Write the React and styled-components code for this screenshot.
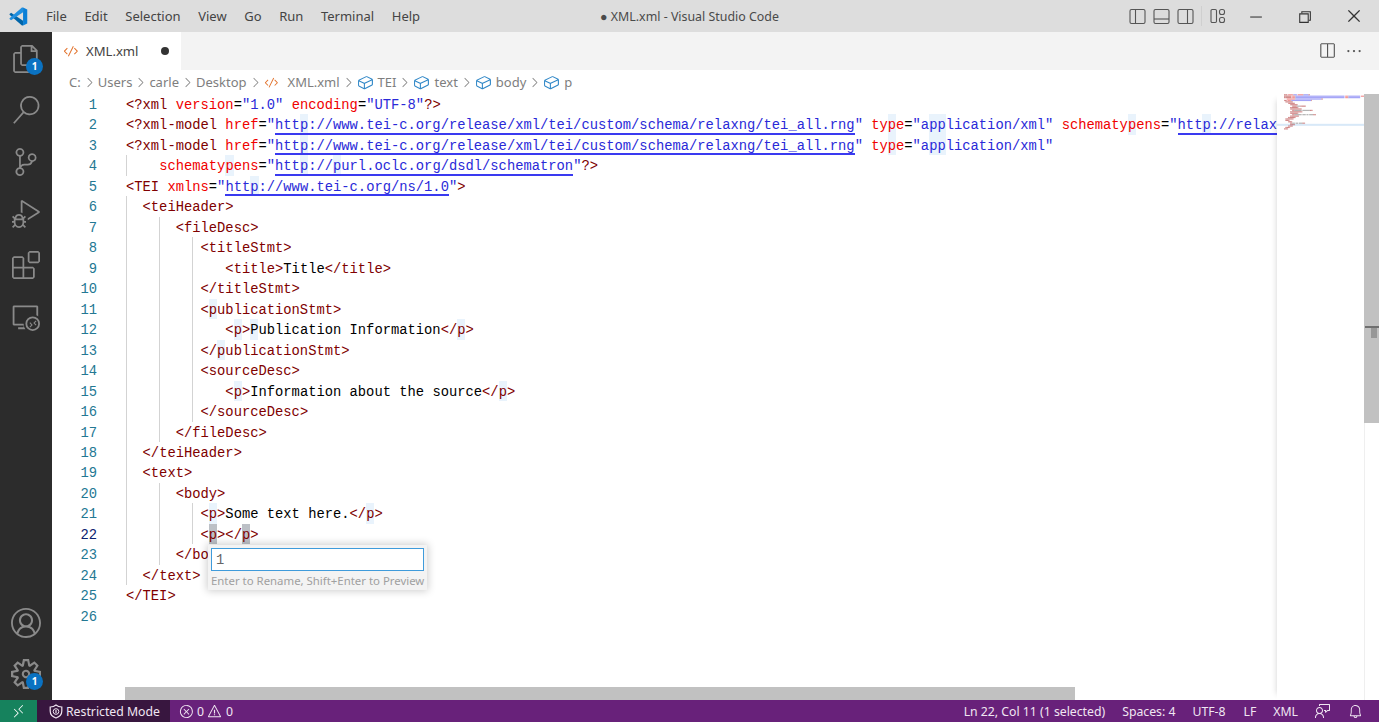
import React from "react";
import styled, { createGlobalStyle } from "styled-components";
import {
  VscFiles, VscSearch, VscSourceControl, VscDebugAlt, VscExtensions, VscRemoteExplorer,
  VscAccount, VscSettingsGear, VscChromeMinimize, VscChromeRestore, VscChromeClose,
  VscSplitHorizontal, VscEllipsis, VscCode, VscSymbolField, VscChevronRight, VscRemote,
  VscError, VscWarning, VscFeedback, VscBell,
} from "react-icons/vsc";

const UI = `"Noto Sans", "Open Sans", sans-serif`;
const MONO = `"Liberation Mono", monospace`;
const LINE_H = 20.48;
const TEXT_LH = 24;
const CHAR_W = 8.29;

const Global = createGlobalStyle`
  html, body { margin: 0; padding: 0; height: 100%; background: #fff; overflow: hidden; }
  #root { height: 100%; }
  * { box-sizing: border-box; }
`;

const Page = styled.div`
  display: flex; flex-direction: column; height: 722px; width: 1379px; overflow: hidden;
  font-family: ${UI};
`;
const TitleBar = styled.header`
  height: 32px; flex: none; background: #dddddd; color: #333;
  display: grid; grid-template-columns: 1fr auto 1fr; align-items: center;
`;
const TitleLeft = styled.div`display: flex; align-items: center; height: 100%;`;
const Logo = styled.svg`width: 19px; height: 19px; margin: 0 18px 0 9px; flex: none;`;
const Menu = styled.nav`display: flex; gap: 17.6px; font-size: 13px; color: #444;`;
const MenuItem = styled.span``;
const WindowTitle = styled.div`font-size: 12.4px; color: #4a4a4a; white-space: pre;`;
const TitleRight = styled.div`display: flex; align-items: center; justify-content: flex-end; height: 100%; color: #555;`;
const LayoutBtn = styled.div`
  width: 24px; height: 100%; display: flex; align-items: center; justify-content: center;
`;
const Sep = styled.div`width: 1px; height: 20px; background: #cfcfcf; margin: 0 3px 0 3px;`;
const CustomBtn = styled(LayoutBtn)`width: 26px; margin-right: 0;`;
const WinBtn = styled.div`
  width: 49.5px; height: 100%; display: flex; align-items: center; justify-content: center; color: #333;
`;

const Main = styled.div`flex: 1; display: flex; min-height: 0;`;
const ActivityBar = styled.aside`
  width: 52px; flex: none; background: #2c2c2c; display: flex; flex-direction: column;
  justify-content: space-between; padding-top: 1px; color: #8a8a8a;
`;
const ActivityGroup = styled.div`display: flex; flex-direction: column;`;
const ActivityItem = styled.div`
  position: relative; height: 51.6px; display: flex; align-items: center; justify-content: center;
`;
const Badge = styled.span`
  position: absolute; left: 26px; top: 25px; width: 17px; height: 17px; border-radius: 50%;
  background: #0a72c2; color: #fff; font: 700 10px/17px ${UI}; text-align: center;
`;

const EditorArea = styled.main`flex: 1; min-width: 0; display: flex; flex-direction: column;`;
const TabBar = styled.div`
  height: 38px; flex: none; background: #f3f3f3; display: flex; justify-content: space-between;
`;
const Tab = styled.div`
  width: 129px; background: #fff; display: flex; align-items: center; padding-left: 11px;
  font-size: 13.1px; color: #444;
`;
const TabName = styled.span`margin-left: 7px; flex: 1;`;
const Dirty = styled.span`width: 8px; height: 8px; border-radius: 50%; background: #333; margin-right: 12px;`;
const TabActions = styled.div`display: flex; align-items: center; gap: 9px; padding-right: 16px; color: #555;`;
const Breadcrumbs = styled.div`
  height: 24px; flex: none; display: flex; align-items: center; padding-left: 17px;
  font-size: 13px; color: #7e7e7e; background: #fff;
`;
const Crumb = styled.span`display: flex; align-items: center; gap: ${(p) => p.$gap ?? 4}px;`;
const Chevron = styled(VscChevronRight)`margin: 0 1px; color: #888; flex: none;`;

const EditorBody = styled.div`flex: 1; min-height: 0; display: flex; position: relative; background: #fff;`;
const Gutter = styled.div`
  width: 74px; flex: none; font: 13.8px/${TEXT_LH}px ${MONO}; color: #237893; text-align: right;
  padding-right: 29px;
`;
const LineNo = styled.div`height: ${LINE_H}px; color: ${(p) => (p.$active ? "#0b216f" : "#237893")};`;
const Code = styled.div`flex: 1; min-width: 0; overflow: hidden; font: 13.8px/${TEXT_LH}px ${MONO}; color: #000;`;
const Row = styled.div`position: relative; height: ${LINE_H}px; white-space: pre;`;
const Guide = styled.i`
  position: absolute; top: 0; height: ${LINE_H}px; width: 1px; background: #d3d3d3; left: ${(p) => p.$col * CHAR_W - 0.5}px;
`;
const Delim = styled.span`color: #800000;`;
const TagName = styled.span`color: #800000;`;
const AttrName = styled.span`color: #f00000;`;
const Str = styled.span`color: #2a2ad8;`;
const Hit = styled.span`
  display: inline-block; height: ${LINE_H}px; vertical-align: top;
  background: ${(p) => (p.$strong ? "#bcc0c6" : "#e9f3fc")};
`;
const Url = styled.span`
  color: #2a2ad8; display: inline-block; height: ${LINE_H}px; vertical-align: top;
  border-bottom: 2px solid #3a3af0;
  ${Hit} { height: ${LINE_H - 2}px; }
`;

const MinimapBox = styled.div`
  width: 87px; flex: none; background: #fff; position: relative; box-shadow: -6px 0 6px -6px rgba(0,0,0,.18);
`;
const MinimapSvg = styled.svg`position: absolute; left: 0; top: 0; filter: blur(0.5px);`;
const VScroll = styled.div`width: 15px; flex: none; position: relative; border-left: 1px solid #efefef;`;
const VThumb = styled.div`height: 329px; margin-left: -1px; background: #c1c1c1; position: relative;`;
const RulerLine = styled.div`position: absolute; left: 0; right: 0; top: 232px; height: 2px; background: #6f6f6f;`;
const RulerMark = styled.div`position: absolute; left: 6px; width: 6px; top: 234px; height: 10px; background: #979797;`;
const HScroll = styled.div`
  position: absolute; left: 73px; bottom: 0; width: 950px; height: 13px; background: #c1c1c1;
`;
const Rename = styled.div`
  position: absolute; left: 156px; top: 451px; width: 219px; height: 45px; background: #f3f3f3;
  box-shadow: 0 0 8px 1px rgba(0,0,0,.2); padding: 3px 3px 0 3px;
`;
const RenameInput = styled.div`
  height: 23px; background: #fff; border: 1px solid #3f9bdb; font: 13.8px/24px ${MONO}; color: #666;
  padding-left: 4px;
`;
const RenameHint = styled.div`font-size: 11.4px; line-height: 20px; color: #a0a0a0; white-space: nowrap;`;

const StatusBar = styled.footer`
  height: 22px; flex: none; background: #68217a; color: #f0e6f2; display: flex; align-items: center;
  justify-content: space-between; font-size: 12.25px;
`;
const StatusGroup = styled.div`display: flex; align-items: center; height: 100%;`;
const RemoteBtn = styled.div`
  width: 37px; height: 100%; background: #16825d; display: flex; align-items: center; justify-content: center; color: #fff;
`;
const RestrictedBtn = styled.div`
  width: 133px; height: 100%; background: #38163f; display: flex; align-items: center; gap: 3px; padding-left: 12px;
`;
const Item = styled.span`display: flex; align-items: center; gap: ${(p) => p.$gap || 0}px; margin-left: ${(p) => p.$ml || 0}px; white-space: pre;`;

const TEXT = [
  `<?xml version="1.0" encoding="UTF-8"?>`,
  `<?xml-model href="http://www.tei-c.org/release/xml/tei/custom/schema/relaxng/tei_all.rng" type="application/xml" schematypens="http://relaxng.org/ns/structure/1.0"?>`,
  `<?xml-model href="http://www.tei-c.org/release/xml/tei/custom/schema/relaxng/tei_all.rng" type="application/xml"`,
  `    schematypens="http://purl.oclc.org/dsdl/schematron"?>`,
  `<TEI xmlns="http://www.tei-c.org/ns/1.0">`,
  `  <teiHeader>`,
  `      <fileDesc>`,
  `         <titleStmt>`,
  `            <title>Title</title>`,
  `         </titleStmt>`,
  `         <publicationStmt>`,
  `            <p>Publication Information</p>`,
  `         </publicationStmt>`,
  `         <sourceDesc>`,
  `            <p>Information about the source</p>`,
  `         </sourceDesc>`,
  `      </fileDesc>`,
  `  </teiHeader>`,
  `  <text>`,
  `      <body>`,
  `         <p>Some text here.</p>`,
  `         <p></p>`,
  `      </body>`,
  `  </text>`,
  `</TEI>`,
  ``,
];

const guidesFor = (n) => {
  const g = [];
  if (n === 4 || (n >= 6 && n <= 24)) g.push(0);
  if ((n >= 7 && n <= 17) || (n >= 20 && n <= 23)) g.push(4);
  if ((n >= 8 && n <= 16) || n === 21 || n === 22) g.push(8);
  return g;
};

function tokenize(lines) {
  let inTag = false, nameNext = false;
  return lines.map((line, i) => {
    if (i === 3) inTag = true;
    const parts = line.match(/<\?|<\/|<|\?>|>|=|"[^"]*"|\s+|[^\s<>="?]+/g) || [];
    return parts.map((t) => {
      if (/^(<\?|<\/|<)$/.test(t)) { inTag = true; nameNext = true; return { k: "delim", t }; }
      if (/^(\?>|>)$/.test(t)) { inTag = false; return { k: "delim", t }; }
      if (t === "=") return { k: "plain", t };
      if (t[0] === '"') return { k: "str", t };
      if (/^\s+$/.test(t)) return { k: "plain", t };
      if (nameNext) { nameNext = false; return { k: "tag", t }; }
      return { k: inTag ? "attr" : "plain", t };
    });
  });
}
const TOKENS = tokenize(TEXT);

const withHits = (text, strong) =>
  text.split(/([pP])/).map((s, i) => (i % 2 ? <Hit key={i} $strong={strong}>{s}</Hit> : s));

function Token({ tok, line }) {
  const { k, t } = tok;
  if (k === "delim") return <Delim>{t}</Delim>;
  if (k === "tag") return <TagName>{withHits(t, line === 22)}</TagName>;
  if (k === "attr") return <AttrName>{withHits(t)}</AttrName>;
  if (k === "str") {
    const inner = t.slice(1, -1);
    if (inner.startsWith("http")) return <Str>"<Url>{withHits(inner)}</Url>"</Str>;
    return <Str>{withHits(t)}</Str>;
  }
  return <>{withHits(t)}</>;
}

const MINI = { delim: "#c06060", tag: "#c06060", attr: "#f07070", str: "#8484f4", plain: "#999" };
function Minimap() {
  const cw = 0.68, lh = 1.42, rects = [];
  TOKENS.forEach((toks, i) => {
    let col = 0;
    toks.forEach((tk, j) => {
      const len = tk.t.length;
      if (tk.t.trim()) rects.push(<rect key={`${i}-${j}`} x={7 + col * cw} y={i * lh + 0.2} width={len * cw} height={1.2} fill={MINI[tk.k]} opacity={0.75} />);
      col += len;
    });
  });
  return (
    <MinimapBox>
      <MinimapSvg width="87" height="60" viewBox="0 0 87 60">
        <rect x="0" y={21 * lh} width="87" height={lh + 0.6} fill="#d8e9f8" />
        {rects}
      </MinimapSvg>
    </MinimapBox>
  );
}

const CodeLogo = () => (
  <Logo viewBox="0 0 100 100">
    <polygon points="11,30 3,37 3,41 68,98 74,98 74,72" fill="#0065a9" />
    <polygon points="74,2 68,2 3,59 3,63 11,70 74,28" fill="#1f8fe0" />
    <polygon points="74,2 96,13 96,87 74,98" fill="#0a7fd6" />
  </Logo>
);

const Pane = ({ kind }) => (
  <svg width="17" height="17" viewBox="0 0 17 17" fill="none" stroke="currentColor" strokeWidth="1.1">
    <rect x="1" y="1.5" width="15" height="14" rx="1.5" />
    {kind === "left" && <line x1="6.5" y1="1.5" x2="6.5" y2="15.5" />}
    {kind === "bottom" && <line x1="1" y1="11" x2="16" y2="11" />}
    {kind === "right" && <line x1="10.5" y1="1.5" x2="10.5" y2="15.5" />}
  </svg>
);
const CustomLayout = () => (
  <svg width="16" height="16" viewBox="0 0 16 16" fill="none" stroke="currentColor" strokeWidth="1.1">
    <rect x="1" y="1.5" width="5.5" height="13" rx="1.2" />
    <rect x="9.5" y="1.5" width="5" height="5" rx="2" />
    <rect x="9.5" y="9.5" width="5" height="5" rx="2" />
  </svg>
);
const Shield = () => (
  <svg width="14" height="15" viewBox="0 0 14 15" fill="none" stroke="currentColor" strokeWidth="1.2">
    <path d="M7 1 C5.4 2.4 3.4 3 1.2 3 V7 C1.2 10.4 3.4 12.8 7 14 C10.6 12.8 12.8 10.4 12.8 7 V3 C10.6 3 8.6 2.4 7 1 Z" />
    <circle cx="7" cy="7.5" r="2.8" strokeWidth="1" />
    <path d="M7 6 V9" strokeWidth="1.2" />
  </svg>
);

const MENUS = ["File", "Edit", "Selection", "View", "Go", "Run", "Terminal", "Help"];
const TOP_ICONS = [VscFiles, VscSearch, VscSourceControl, VscDebugAlt, VscExtensions, VscRemoteExplorer];

export default function App() {
  return (
    <Page>
      <Global />
      <TitleBar>
        <TitleLeft>
          <CodeLogo />
          <Menu>{MENUS.map((m) => <MenuItem key={m}>{m}</MenuItem>)}</Menu>
        </TitleLeft>
        <WindowTitle>● XML.xml - Visual Studio Code</WindowTitle>
        <TitleRight>
          <LayoutBtn><Pane kind="left" /></LayoutBtn>
          <LayoutBtn><Pane kind="bottom" /></LayoutBtn>
          <LayoutBtn><Pane kind="right" /></LayoutBtn>
          <Sep />
          <CustomBtn><CustomLayout /></CustomBtn>
          <WinBtn><VscChromeMinimize size={17} /></WinBtn>
          <WinBtn><VscChromeRestore size={17} /></WinBtn>
          <WinBtn><VscChromeClose size={18} /></WinBtn>
        </TitleRight>
      </TitleBar>
      <Main>
        <ActivityBar>
          <ActivityGroup>
            {TOP_ICONS.map((Icon, i) => (
              <ActivityItem key={i}>
                <Icon size={28} />
                {i === 0 && <Badge>1</Badge>}
              </ActivityItem>
            ))}
          </ActivityGroup>
          <ActivityGroup>
            <ActivityItem><VscAccount size={30} /></ActivityItem>
            <ActivityItem><VscSettingsGear size={30} /><Badge>1</Badge></ActivityItem>
          </ActivityGroup>
        </ActivityBar>
        <EditorArea>
          <TabBar>
            <Tab>
              <VscCode size={16} color="#e2722c" />
              <TabName>XML.xml</TabName>
              <Dirty />
            </Tab>
            <TabActions>
              <VscSplitHorizontal size={18} />
              <VscEllipsis size={18} />
            </TabActions>
          </TabBar>
          <Breadcrumbs>
            <Crumb>C:</Crumb><Chevron size={15} />
            <Crumb>Users</Crumb><Chevron size={15} />
            <Crumb>carle</Crumb><Chevron size={15} />
            <Crumb>Desktop</Crumb><Chevron size={15} />
            <Crumb $gap={9}><VscCode size={15} color="#e2722c" />XML.xml</Crumb><Chevron size={15} />
            <Crumb><VscSymbolField size={17} color="#2f87c7" />TEI</Crumb><Chevron size={15} />
            <Crumb><VscSymbolField size={17} color="#2f87c7" />text</Crumb><Chevron size={15} />
            <Crumb><VscSymbolField size={17} color="#2f87c7" />body</Crumb><Chevron size={15} />
            <Crumb><VscSymbolField size={17} color="#2f87c7" />p</Crumb>
          </Breadcrumbs>
          <EditorBody>
            <Gutter>
              {TEXT.map((_, i) => <LineNo key={i} $active={i === 21}>{i + 1}</LineNo>)}
            </Gutter>
            <Code>
              {TOKENS.map((toks, i) => (
                <Row key={i}>
                  {guidesFor(i + 1).map((c) => <Guide key={c} $col={c} />)}
                  {toks.map((tk, j) => <Token key={j} tok={tk} line={i + 1} />)}
                </Row>
              ))}
            </Code>
            <Minimap />
            <VScroll>
              <VThumb />
              <RulerLine />
              <RulerMark />
            </VScroll>
            <HScroll />
            <Rename>
              <RenameInput>1</RenameInput>
              <RenameHint>Enter to Rename, Shift+Enter to Preview</RenameHint>
            </Rename>
          </EditorBody>
        </EditorArea>
      </Main>
      <StatusBar>
        <StatusGroup>
          <RemoteBtn><VscRemote size={15} /></RemoteBtn>
          <RestrictedBtn><Shield />Restricted Mode</RestrictedBtn>
          <Item $ml={9} $gap={3}><VscError size={15} />0</Item>
          <Item $ml={3} $gap={4}><VscWarning size={15} />0</Item>
        </StatusGroup>
        <StatusGroup>
          <Item>Ln 22, Col 11 (1 selected)</Item>
          <Item $ml={17}>Spaces: 4</Item>
          <Item $ml={17}>UTF-8</Item>
          <Item $ml={18}>LF</Item>
          <Item $ml={17}>XML</Item>
          <Item $ml={17}><VscFeedback size={16} /></Item>
          <Item $ml={17}><VscBell size={15} /></Item>
          <Item $ml={16} />
        </StatusGroup>
      </StatusBar>
    </Page>
  );
}
